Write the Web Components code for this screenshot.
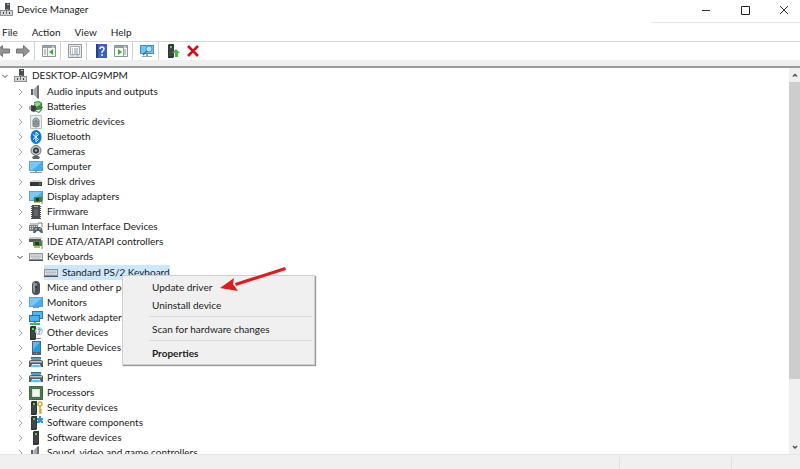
<!DOCTYPE html>
<html lang="en">
<head>
<meta charset="UTF-8">
<meta name="viewport" content="width=device-width, initial-scale=1">
<title>Device Manager</title>
<style>
    body {
        margin: 0;
        font-family: Lato, "Open Sans", sans-serif;
        font-size: 10px;
        line-height: 15px;
        color: #1a1a1a;
    }
</style>
</head>
<body>
<device-manager></device-manager>

<script>
const tower = (x) => `
    <path d="M${x} 1l1-1h5v13l-1 1h-5z" fill="#34373a"/>
    <path d="M${x + 1} 5h4M${x + 1} 7h4M${x + 1} 9h4M${x + 1} 11h4" stroke="#5d6366" stroke-width=".7"/>
    <path d="M${x + 2} 2h2v2h-2z" fill="#45d94b"/>`;

const monitor = `
    <path d="M0 1h14v10H0z" fill="#5b97bf"/>
    <path d="M.8 1.8h12.4v8.4H.8z" fill="#45adf0"/>
    <path d="M.8 1.8h12.4L3 10.2H.8z" fill="#79c8f8"/>`;

const printer = `
    <path d="M2 1h10v2H2z" fill="#5a6166"/>
    <path d="M3 2h8l1 3H2z" fill="#3fa9d8"/>
    <path d="M0 5l2-1h10l2 1v6h-3V8H3v3H0z" fill="#555c61"/>
    <path d="M1 5h12v1.500H1z" fill="#b9c1c6"/>
    <path d="M3 8h8l1 4H2z" fill="#d8eff8"/>
    <path d="M3.500 9h7l.5 2H3z" fill="#57c2e6"/>`;

const keyboard = `
    <path d="M0 3h14v8H0z" fill="#8d9396"/>
    <path d="M1 4h12v5H1z" fill="#dcdfe0"/>
    <path d="M2 5h10M2 6.500h10M3 8h8" stroke="#9da3a6" stroke-width=".8" stroke-dasharray="1 .5"/>
    <path d="M0 10h14v1H0z" fill="#4d5356"/>`;

const speaker = `
    <path d="M2 4h3v6H2z" fill="#5b5f62"/>
    <path d="M5 4l4-4v14l-4-4z" fill="#a4a9ac"/>
    <path d="M8 1l2-1v14l-2-1z" fill="#6b7073"/>
    <path d="M4.500 4v6" stroke="#c9cdcf"/>`;

const panel = (side) => `
    <path d="M.5 1.500h13v11H.5z" fill="#f4f6f7" stroke="#8b9499"/>
    <path d="M1 2h12v2H1z" fill="#94a0a8"/>
    <path d="M10 3h2" stroke="#fff"/>
    <path d="M${side === 'left' ? 5 : 9}.5 4v8" stroke="#9ba5ab"/>
    <path d="M${side === 'left' ? 2 : 10} 6h2M${side === 'left' ? 2 : 10} 8h2M${side === 'left' ? 2 : 10} 10h2" stroke="#7f93a3"/>
    <path d="${side === 'left' ? 'M11 5v6L7 8z' : 'M4 5v6l4-3z'}" fill="#3fae35"/>`;

const ICONS = {
    root: `
        <path d="M5 0h5v7H5z" fill="#4a4e51"/>
        <path d="M7 1h2v1H7z" fill="#9be09b"/>
        <path d="M0 7h5l1-1h2l1 1h4v6H0z" fill="#8e9396"/>
        <path d="M1 8h11v4H1z" fill="#d3d6d8"/>
        <path d="M3 9h1v2H3zM9 9h1v2H9z" fill="#3e4245"/>
        <path d="M6 7h1v4H6z" fill="#6e7376"/>`,
    audio: speaker,
    battery: `
        <path d="M5 2l5-1 3 2v7l-3 3-5-2z" fill="#3a8c3c"/>
        <path d="M5 3l5-1 2 2-5 3z" fill="#8ed88d"/>
        <path d="M7 10l5-1-2 3-3-1z" fill="#d5f0d2"/>
        <path d="M2 5l5 1v4l-2 2-3-1z" fill="#3c3f41"/>
        <path d="M0 7h3M0 9h3M6 9c4 1 5-1 8-2" stroke="#54585a" fill="none"/>`,
    biometric: `
        <path d="M1.500.5h11v13h-11z" fill="#e6eeee" stroke="#b6c4c4"/>
        <path d="M4 11V5q3-4 6 0v6q-3 2-6 0z" fill="#a9afb2" stroke="#7a8083"/>
        <path d="M6 11V6q1-2 2 0v5M4 7h6M4 9h6" stroke="#74797c" fill="none" stroke-width=".7"/>`,
    bluetooth: `
        <ellipse cx="7" cy="7" rx="5.500" ry="7" fill="#0878d8"/>
        <path d="M4 4.500l5.500 5L7 12V2l2.500 2.500L4 9.500" stroke="#fff" fill="none"/>`,
    camera: `
        <path d="M3 12q4-3 8 0l-1 2H4z" fill="#5d6265"/>
        <circle cx="7" cy="5.500" r="5" fill="#c2c6c8" stroke="#6b7174"/>
        <circle cx="7" cy="5.500" r="3" fill="#34383a"/>
        <circle cx="7" cy="5.500" r="1.300" fill="#a6acaf"/>`,
    computer: `${monitor}
        <path d="M6 11h2v1H6z" fill="#9ba4aa"/>
        <path d="M1 12h12v1H1z" fill="#8a949a"/>`,
    disk: `
        <path d="M3 5h8l2 2H1z" fill="#d3d6d7"/>
        <path d="M1 7h12v4H1z" fill="#34383a"/>
        <path d="M10 8.500h2v1h-2z" fill="#48cb50"/>`,
    display: `${monitor}
        <path d="M5 7h8v5H5z" fill="#3d7f3b"/>
        <path d="M7 8h3v3H7z" fill="#263126"/>
        <path d="M5 12h6v1H5z" fill="#d7b54a"/>
        <path d="M13 6v8" stroke="#777"/>`,
    firmware: `
        <path d="M3 0h8v14H3z" fill="#4a4e50"/>
        <path d="M2.500 1v13M11.500 1v13" stroke="#444" stroke-dasharray="1 1"/>
        <path d="M5 1h4v1H5z" fill="#a8acae"/>
        <path d="M5 4h4v7H5z" fill="#626668"/>`,
    hid: `
        <path d="M1 3h9v2H1z" fill="#c0c5c8"/>
        <path d="M0 5h9v6H0z" fill="#7b858b"/>
        <path d="M1 6.500h7M1 8.500h7" stroke="#d6dadd" stroke-dasharray="1 1"/>
        <path d="M4 13l1-5 1-1h5l2 1 1 5h-2l-2-2H8l-2 2z" fill="#50606c"/>
        <path d="M9 3h4v4" stroke="#777f84" fill="none"/>
        <path d="M6 9h2M10 9h2" stroke="#b8dbee"/>`,
    ide: `
        <path d="M1 2h11l1 2H0z" fill="#c7caca"/>
        <path d="M0 4h12v3H0z" fill="#53595b"/>
        <path d="M4 6h9v5H4z" fill="#338b45"/>
        <path d="M6 7h4v3H6z" fill="#203c27"/>
        <path d="M5 11h6v2H5z" fill="#ccb14c"/>
        <path d="M13 5v9" stroke="#73797b"/>`,
    keyboard,
    mouse: `
        <rect x="3" y="0" width="8" height="14" rx="4" fill="#4b5156"/>
        <path d="M4 5q0-4 2-4v11q-2-1-2-4z" fill="#929a9f"/>
        <path d="M7 1v6" stroke="#202427"/>
        <path d="M7 2v3" stroke="#b0dff6"/>`,
    monitor: `${monitor}
        <path d="M4 11h6v1H4z" fill="#7e9baa"/>`,
    network: `
        <path d="M3 0h11v8H3z" fill="#297fae"/>
        <path d="M4 1h9v6H4z" fill="#51b9ef"/>
        <path d="M0 4h11v7H0z" fill="#276f9e"/>
        <path d="M1 5h9v5H1z" fill="#4bb4ef"/>
        <path d="M5 11h2v1h4v2H1v-2h4z" fill="#4fb055"/>`,
    other: `${tower(1)}
        <circle cx="10" cy="5" r="3.500" fill="#eef5fa" stroke="#b3c0c9"/>
        <path d="M9 4q1-2 2-1t-1 3v.500M10 7v1" stroke="#4280b8" fill="none"/>
        <path d="M7 12.500h5" stroke="#85898b"/>`,
    portable: `
        <path d="M3 0h9v14H3z" fill="#566269"/>
        <path d="M4 1h7v10H4z" fill="#209bea"/>
        <path d="M4 1h7L4 9z" fill="#58baf4"/>
        <path d="M7 12h1v1H7z" fill="#b4c0c6"/>`,
    printer,
    processor: `
        <path d="M.5.5h13v13H.5z" fill="#41724b" stroke="#315c3b"/>
        <path d="M3 3h8v8H3z" fill="#d5e4d3"/>
        <path d="M4 4h6v6H4z" fill="#f4f6ef"/>
        <path d="M1 1h12v12H1z" fill="none" stroke="#b2b45d" stroke-width=".5" stroke-dasharray="1 1"/>`,
    security: `${tower(2)}
        <circle cx="11" cy="3" r="2" fill="none" stroke="#dba838" stroke-width="1.500"/>
        <path d="M11 5v8M11 9h2M11 11.500h2" stroke="#d6a02e" stroke-width="1.500"/>`,
    component: `${tower(2)}
        <path d="M8 2h2V0h2v2h2v2h-1v1h1v2h-2V6h-1v1H8V5h1V4H8z" fill="#2e90e4"/>`,
    software: tower(4),
    back: '<path d="M.5 7l6-5.500V5h7v4h-7v3.500z" fill="#939393" stroke="#747474"/>',
    forward: '<path d="M13.500 7l-6-5.500V5h-7v4h7v3.500z" fill="#939393" stroke="#747474"/>',
    tree: panel('left'),
    properties: `
        <path d="M.5.5h13v13H.5z" fill="#e8ecee" stroke="#8d989f"/>
        <path d="M2.500 2.500h9v8h-9z" fill="#fff" stroke="#a2acb2"/>
        <path d="M4 5h1M6 5h4M4 7h1M6 7h4M4 9h1M6 9h4" stroke="#7e97aa"/>
        <path d="M3 12h3M8 12h3" stroke="#94b5c6"/>`,
    help: `
        <path d="M2 0h11v14H2z" fill="#3a5fc0"/>
        <path d="M2 0h2v14H2z" fill="#243f8f"/>
        <path d="M6 5q0-2 2-2t2 2q0 1-2 3v1M8 10v2" stroke="#fff" stroke-width="1.500" fill="none"/>`,
    actions: panel('right'),
    scan: `
        <path d="M0 1h14v9H0z" fill="#3993cc"/>
        <path d="M1 2h12v7H1z" fill="#69c5f4"/>
        <path d="M6 10h2v2h4v1H2v-1h4z" fill="#98a3aa"/>
        <circle cx="9" cy="5" r="3" fill="#b8e5fa" stroke="#5593ba"/>
        <path d="M7 7l-4 4" stroke="#426c88" stroke-width="1.500"/>`,
    update: `${tower(2)}
        <path d="M10 5l4 4h-2v4H9V9H6z" fill="#3fbb3f"/>`,
    remove: '<path d="M2 2l10 10M12 2L2 12" stroke="#d10d18" stroke-width="2.500"/>',
    minimize: '<path d="M3 7.500h8" stroke="#333"/>',
    maximize: '<path d="M3.500 3.500h8v8h-8z" stroke="#222" fill="none"/>',
    close: '<path d="M3 3l8 8M11 3l-8 8" stroke="#333"/>',
    collapsed: '<path d="M6 4l3 3-3 3" stroke="#a6a6a6" fill="none"/>',
    expanded: '<path d="M4.500 6L7 8.500 9.500 6" stroke="#444" fill="none"/>',
    up: '<path d="M5 8.500l2-2 2 2" stroke="#505050" stroke-width="1.500" fill="none"/>',
    down: '<path d="M5 6l2 2 2-2" stroke="#505050" stroke-width="1.500" fill="none"/>'
};

const BUTTON_CSS = `
    button {
        display: flex;
        align-items: center;
        justify-content: center;
        padding: 0;
        border: 0;
        background: none;
        color: inherit;
        font: inherit;
        white-space: nowrap;
    }
`;

class DmIcon extends HTMLElement {
    constructor() {
        super();
        this.attachShadow({ mode: 'open' });
    }

    connectedCallback() {
        this.shadowRoot.innerHTML = `
            <style>
                :host { display: block; flex: none; width: 14px; height: 14px; }
                svg { display: block; width: 100%; height: 100%; }
            </style>
            <svg viewBox="0 0 14 14" aria-hidden="true">${ICONS[this.getAttribute('name')]}</svg>
        `;
    }
}
customElements.define('dm-icon', DmIcon);

class DmTitlebar extends HTMLElement {
    constructor() {
        super();
        this.attachShadow({ mode: 'open' });
    }

    connectedCallback() {
        this.shadowRoot.innerHTML = `
            <style>
                ${BUTTON_CSS}
                :host { display: flex; height: 23px; }
                h1 {
                    flex: 1;
                    display: flex;
                    align-items: center;
                    gap: 3px;
                    height: 19px;
                    margin: 0;
                    font-size: inherit;
                    font-weight: normal;
                }
                .controls {
                    display: flex;
                    margin-right: -3px;
                    padding-left: 36px;
                    border-bottom: 1px solid #e8e8e8;
                }
                button { width: 39px; height: 19px; }
                button:hover { background: #e5e5e5; }
            </style>
            <h1><dm-icon name="root"></dm-icon><slot></slot></h1>
            <div class="controls">
                <button type="button" aria-label="Minimize"><dm-icon name="minimize"></dm-icon></button>
                <button type="button" aria-label="Maximize"><dm-icon name="maximize"></dm-icon></button>
                <button type="button" aria-label="Close"><dm-icon name="close"></dm-icon></button>
            </div>
        `;
    }
}
customElements.define('dm-titlebar', DmTitlebar);

class DmMenubar extends HTMLElement {
    constructor() {
        super();
        this.attachShadow({ mode: 'open' });
    }

    connectedCallback() {
        const items = this.getAttribute('items').split(',');
        this.shadowRoot.innerHTML = `
            <style>
                ${BUTTON_CSS}
                :host { display: block; border-bottom: 1px solid #d5d5d5; }
                nav { display: flex; gap: 14px; height: 18px; padding-left: 2px; }
            </style>
            <nav>${items.map((item) => `<button type="button">${item}</button>`).join('')}</nav>
        `;
    }
}
customElements.define('dm-menubar', DmMenubar);

class DmToolbar extends HTMLElement {
    constructor() {
        super();
        this.attachShadow({ mode: 'open' });
    }

    connectedCallback() {
        const groups = [
            [['back', 'Back'], ['forward', 'Forward']],
            [['tree', 'Show/Hide Console Tree']],
            [['properties', 'Properties']],
            [['help', 'Help'], ['actions', 'Show/Hide Action Pane']],
            [['scan', 'Scan for hardware changes']],
            [['update', 'Update driver'], ['remove', 'Uninstall device']]
        ];
        this.shadowRoot.innerHTML = `
            <style>
                ${BUTTON_CSS}
                :host {
                    display: flex;
                    height: 18px;
                    border-bottom: 6px solid #efefef;
                }
                .group {
                    display: flex;
                    align-items: center;
                    gap: 6px;
                    padding: 0 4px 0 7px;
                    border-left: 1px solid #d2d2d2;
                }
                .group:first-of-type { border: 0; padding-left: 0; margin-left: -4px; }
            </style>
            ${groups.map((group) => `
                <div class="group">
                    ${group.map(([icon, label]) => `
                        <button type="button" aria-label="${label}"><dm-icon name="${icon}"></dm-icon></button>
                    `).join('')}
                </div>
            `).join('')}
        `;
    }
}
customElements.define('dm-toolbar', DmToolbar);

class DmNode extends HTMLElement {
    constructor() {
        super();
        this.attachShadow({ mode: 'open' });
    }

    connectedCallback() {
        const open = this.hasAttribute('open');
        const leaf = this.hasAttribute('leaf');
        this.setAttribute('role', 'treeitem');
        this.shadowRoot.innerHTML = `
            <style>
                ${BUTTON_CSS}
                :host { display: block; }
                .row { display: flex; align-items: center; gap: 6px; height: 15px; }
                .toggle { flex: none; width: 7px; height: 15px; }
                .label {
                    display: flex;
                    align-items: center;
                    gap: 4px;
                    height: 15px;
                    white-space: nowrap;
                }
                :host([selected]) .label { background: #cce8ff; }
                .children { display: none; padding: 1px 0 0 15px; }
                :host([open]) > .children { display: block; }
            </style>
            <div class="row">
                ${leaf ? '<span class="toggle"></span>' : `
                    <button class="toggle" type="button" aria-label="Toggle">
                        <dm-icon name="${open ? 'expanded' : 'collapsed'}"></dm-icon>
                    </button>`}
                <span class="label"><dm-icon name="${this.getAttribute('icon')}"></dm-icon>${this.getAttribute('label')}</span>
            </div>
            <div class="children" role="group"><slot></slot></div>
        `;
    }
}
customElements.define('dm-node', DmNode);

class DmScrollbar extends HTMLElement {
    constructor() {
        super();
        this.attachShadow({ mode: 'open' });
    }

    connectedCallback() {
        this.shadowRoot.innerHTML = `
            <style>
                ${BUTTON_CSS}
                :host { display: flex; flex-direction: column; flex: none; width: 11px; background: #f0f0f0; }
                button { flex: none; width: 11px; height: 14px; }
                .track { flex: 1; }
                .thumb { height: 83%; background: #cdcdcd; }
            </style>
            <button type="button" aria-label="Scroll up"><dm-icon name="up"></dm-icon></button>
            <div class="track"><div class="thumb"></div></div>
            <button type="button" aria-label="Scroll down"><dm-icon name="down"></dm-icon></button>
        `;
    }
}
customElements.define('dm-scrollbar', DmScrollbar);

class DmContextMenu extends HTMLElement {
    constructor() {
        super();
        this.attachShadow({ mode: 'open' });
    }

    connectedCallback() {
        this.shadowRoot.innerHTML = `
            <style>
                ${BUTTON_CSS}
                :host {
                    display: block;
                    box-sizing: border-box;
                    width: 193px;
                    padding: 2px;
                    background: #f0f0f0;
                    border: 1px solid #cfcfcf;
                    box-shadow: 1px 1px 1px rgb(0 0 0 / 0.4);
                }
                button {
                    justify-content: flex-start;
                    width: 100%;
                    height: 18px;
                    padding-left: 27px;
                }
                button:hover { background: #fff; }
                hr { margin: 2px 0 3px 24px; border: 0; border-top: 1px solid #dadada; }
                .default { font-weight: bold; }
            </style>
            <div role="menu">
                <button type="button" role="menuitem">Update driver</button>
                <button type="button" role="menuitem">Uninstall device</button>
                <hr>
                <button type="button" role="menuitem">Scan for hardware changes</button>
                <hr>
                <button type="button" role="menuitem" class="default">Properties</button>
            </div>
        `;
    }
}
customElements.define('dm-context-menu', DmContextMenu);

class DmStatusbar extends HTMLElement {
    constructor() {
        super();
        this.attachShadow({ mode: 'open' });
    }

    connectedCallback() {
        this.shadowRoot.innerHTML = `
            <style>
                :host {
                    display: grid;
                    grid-template-columns: 1fr 111px 69px;
                    gap: 1px;
                    height: 14px;
                    background: #f0f0f0;
                    border-top: 1px solid #e6e6e6;
                }
                span + span { border-left: 1px solid #e0e0e0; margin-top: 2px; }
            </style>
            <span></span><span></span><span></span>
        `;
    }
}
customElements.define('dm-statusbar', DmStatusbar);

class DeviceManager extends HTMLElement {
    constructor() {
        super();
        this.attachShadow({ mode: 'open' });
    }

    connectedCallback() {
        const before = [
            ['audio', 'Audio inputs and outputs'],
            ['battery', 'Batteries'],
            ['biometric', 'Biometric devices'],
            ['bluetooth', 'Bluetooth'],
            ['camera', 'Cameras'],
            ['computer', 'Computer'],
            ['disk', 'Disk drives'],
            ['display', 'Display adapters'],
            ['firmware', 'Firmware'],
            ['hid', 'Human Interface Devices'],
            ['ide', 'IDE ATA/ATAPI controllers']
        ];
        const after = [
            ['mouse', 'Mice and other pointing devices'],
            ['monitor', 'Monitors'],
            ['network', 'Network adapters'],
            ['other', 'Other devices'],
            ['portable', 'Portable Devices'],
            ['printer', 'Print queues'],
            ['printer', 'Printers'],
            ['processor', 'Processors'],
            ['security', 'Security devices'],
            ['component', 'Software components'],
            ['software', 'Software devices'],
            ['audio', 'Sound, video and game controllers']
        ];
        const nodes = (list) => list.map(([icon, label]) => `<dm-node icon="${icon}" label="${label}"></dm-node>`).join('');

        this.shadowRoot.innerHTML = `
            <style>
                :host {
                    position: relative;
                    display: flex;
                    flex-direction: column;
                    height: 100vh;
                    overflow: hidden;
                    background: #fff;
                }
                main {
                    flex: 1;
                    display: flex;
                    min-height: 0;
                    border-top: 2px solid #9a9a9a;
                }
                .tree { flex: 1; overflow: hidden; padding-left: 1px; }
                dm-context-menu { position: absolute; left: 122px; top: 275px; }
                .pointer { position: absolute; left: 218px; top: 264px; width: 72px; height: 28px; }
            </style>
            <dm-titlebar>Device Manager</dm-titlebar>
            <dm-menubar items="File,Action,View,Help"></dm-menubar>
            <dm-toolbar></dm-toolbar>
            <main>
                <div class="tree" role="tree">
                    <dm-node icon="root" label="DESKTOP-AIG9MPM" open>
                        ${nodes(before)}
                        <dm-node icon="keyboard" label="Keyboards" open>
                            <dm-node icon="keyboard" label="Standard PS/2 Keyboard" leaf selected></dm-node>
                        </dm-node>
                        ${nodes(after)}
                    </dm-node>
                </div>
                <dm-scrollbar></dm-scrollbar>
            </main>
            <dm-statusbar></dm-statusbar>
            <dm-context-menu></dm-context-menu>
            <svg class="pointer" viewBox="0 0 72 28" aria-hidden="true">
                <path d="M67 3L68 6L18 22L17 19z" fill="#e01b1e"/>
                <path d="M2 24L16 14L15 20L20 27z" fill="#e01b1e"/>
            </svg>
        `;
    }
}
customElements.define('device-manager', DeviceManager);
</script>
</body>
</html>
